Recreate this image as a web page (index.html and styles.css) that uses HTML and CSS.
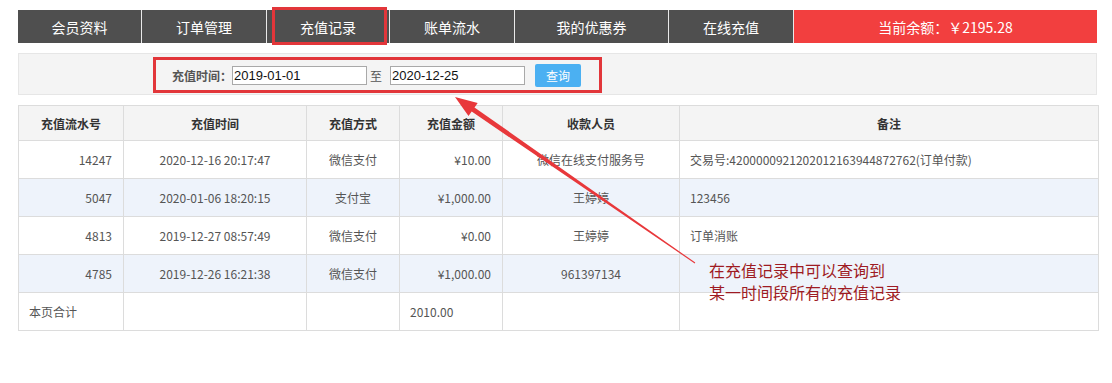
FILE: index.html
```html
<!DOCTYPE html>
<html lang="zh-CN">
<head>
<meta charset="utf-8">
<title>充值记录</title>
<link rel="stylesheet" href="styles.css">
</head>
<body>
<div class="page">
  <nav class="nav">
    <div class="tab w124">会员资料</div>
    <div class="tab w125">订单管理</div>
    <div class="tab w123 active">充值记录<span class="mark"></span></div>
    <div class="tab w125">账单流水</div>
    <div class="tab w154">我的优惠券</div>
    <div class="tab w125">在线充值</div>
    <div class="balance">当前余额：￥2195.28</div>
  </nav>

  <div class="search">
    <div class="search-box">
      <span class="label">充值时间：</span>
      <span class="input">2019-01-01</span>
      <span class="to">至</span>
      <span class="input">2020-12-25</span>
      <span class="btn">查询</span>
    </div>
  </div>

  <table class="grid">
    <colgroup>
      <col class="c1"><col class="c2"><col class="c3"><col class="c4"><col class="c5"><col class="c6">
    </colgroup>
    <thead>
      <tr><th>充值流水号</th><th>充值时间</th><th>充值方式</th><th>充值金额</th><th>收款人员</th><th>备注</th></tr>
    </thead>
    <tbody>
      <tr><td class="r">14247</td><td class="c">2020-12-16 20:17:47</td><td class="c">微信支付</td><td class="r">¥10.00</td><td class="c">微信在线支付服务号</td><td class="l">交易号:4200000921202012163944872762(订单付款)</td></tr>
      <tr class="alt"><td class="r">5047</td><td class="c">2020-01-06 18:20:15</td><td class="c">支付宝</td><td class="r">¥1,000.00</td><td class="c">王婷婷</td><td class="l">123456</td></tr>
      <tr><td class="r">4813</td><td class="c">2019-12-27 08:57:49</td><td class="c">微信支付</td><td class="r">¥0.00</td><td class="c">王婷婷</td><td class="l">订单消账</td></tr>
      <tr class="alt"><td class="r">4785</td><td class="c">2019-12-26 16:21:38</td><td class="c">微信支付</td><td class="r">¥1,000.00</td><td class="c">961397134</td><td class="l"></td></tr>
      <tr><td class="l">本页合计</td><td></td><td></td><td class="l">2010.00</td><td></td><td></td></tr>
    </tbody>
  </table>

  <svg class="arrow" width="1112" height="383" viewBox="0 0 1112 383">
    <polygon points="455,97 477.7,102.9 474.5,107.4 695.3,262.6 694.7,263.4 471.7,111.6 468.5,116.1" fill="#e8383b"/>
  </svg>
  <div class="note">在充值记录中可以查询到<br>某一时间段所有的充值记录</div>
</div>
</body>
</html>
```

FILE: styles.css
```css
* { box-sizing: border-box; }
html, body { margin: 0; padding: 0; background: #fff; }
body { font-family: "Noto Sans CJK SC", "Microsoft YaHei", sans-serif; }

.page {
  position: relative;
  width: 1112px;
  height: 383px;
  padding: 10px 15px 0 18px;
}

.nav {
  display: flex;
  height: 33px;
  width: 1079px;
  background: #4f4f4f;
}
.tab {
  position: relative;
  display: flex;
  align-items: center;
  justify-content: center;
  color: #fff;
  font-size: 14px;
  border-right: 1px solid #e9e9e9;
}
.w123 { width: 123px; }
.w124 { width: 124px; }
.w125 { width: 125px; }
.w154 { width: 154px; }
.mark {
  position: absolute;
  left: 5px;
  top: -3px;
  width: 115px;
  height: 38px;
  border: 3px solid #e2363a;
}
.balance {
  flex: 1;
  display: flex;
  align-items: center;
  justify-content: center;
  background: #f23f3f;
  color: #fff;
  font-size: 14px;
}

.search {
  margin-top: 10px;
  width: 1079px;
  height: 42px;
  background: #f4f4f4;
  border: 1px solid #e6e6e6;
  padding: 3px 0 0 134px;
}
.search-box {
  display: inline-flex;
  align-items: center;
  height: 36px;
  width: 449px;
  border: 3px solid #e2363a;
  padding: 0 0 0 16px;
}
.label {
  font-size: 12px;
  font-weight: bold;
  color: #555;
}
.input {
  display: inline-block;
  width: 135px;
  height: 19px;
  border: 1px solid #a9a9a9;
  background: #fff;
  font-family: "Liberation Sans", Arial, sans-serif;
  font-size: 13px;
  line-height: 17px;
  padding-left: 1px;
  color: #111;
}
.to {
  font-size: 12px;
  color: #555;
  margin: 0 8px 0 3px;
}
.btn {
  display: inline-flex;
  align-items: center;
  justify-content: center;
  width: 46px;
  height: 23px;
  margin-left: 10px;
  background: #4bb0f2;
  border-radius: 2px;
  color: #fff;
  font-size: 12px;
}

.grid {
  margin-top: 10px;
  width: 1080px;
  border-collapse: collapse;
  table-layout: fixed;
  font-size: 12px;
  color: #555;
}
.c1 { width: 105px; }
.c2 { width: 183px; }
.c3 { width: 93px; }
.c4 { width: 103px; }
.c5 { width: 177px; }
.c6 { width: 419px; }
.grid th, .grid td {
  border: 1px solid #dcdcdc;
  height: 38px;
  padding: 0 10px;
  white-space: nowrap;
  overflow: hidden;
}
.grid th {
  height: 35px;
  background: #f4f4f4;
  color: #333;
  font-weight: bold;
  text-align: center;
}
.grid tr.alt td { background: #eef3fb; }
.grid td.r { text-align: right; padding-right: 11px; }
.grid td.c { text-align: center; }
.grid td.l { text-align: left; }

.arrow {
  position: absolute;
  left: 0;
  top: 0;
  pointer-events: none;
}
.note {
  position: absolute;
  left: 709px;
  top: 259px;
  font-size: 16px;
  line-height: 22px;
  color: #9e1b23;
}
```
